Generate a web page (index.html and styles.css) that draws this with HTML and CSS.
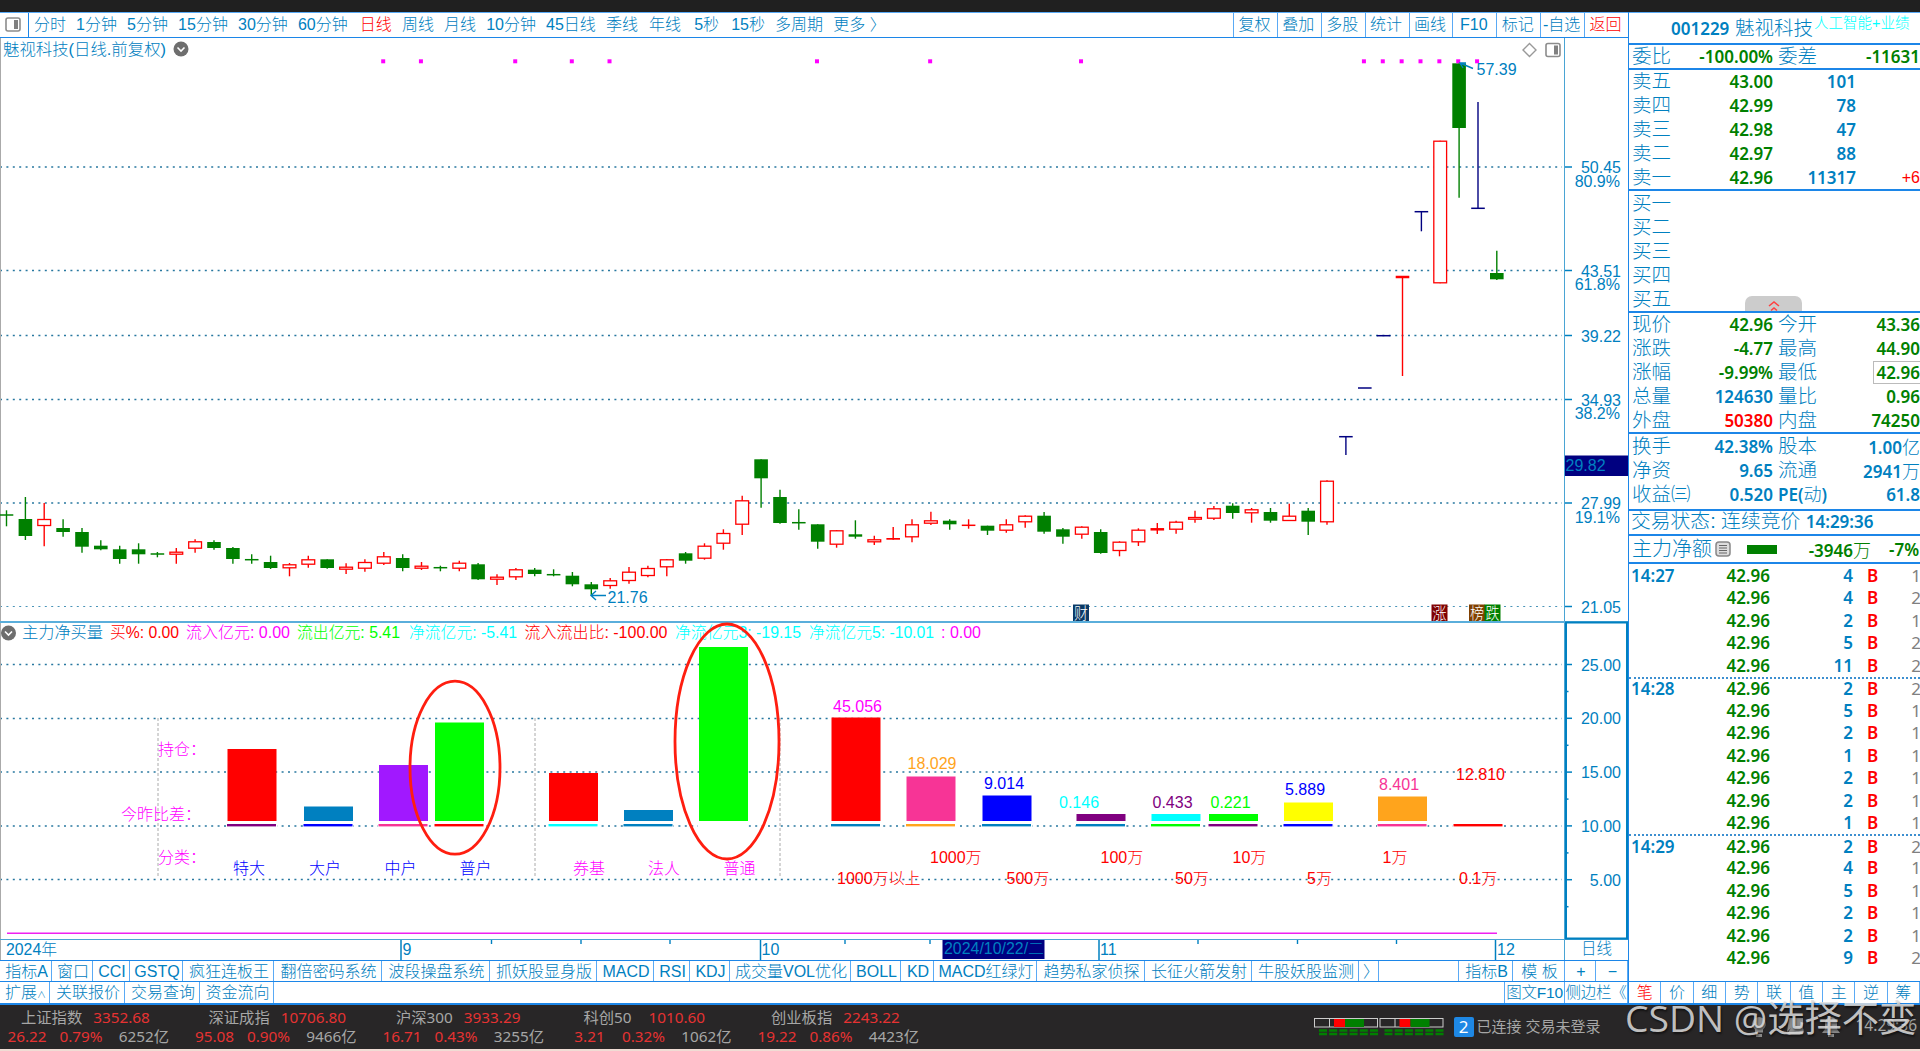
FILE: index.html
```html
<!DOCTYPE html>
<html lang="zh-CN">
<head>
    <meta charset="UTF-8">
    <title>魅视科技 001229</title>
    <link rel="stylesheet" href="styles.css">
</head>
<body>
    <div class="titlebar"></div>
    <div class="workspace">
        <div class="left">
            <div class="toolbar">
                <div class="toggle">
                    <svg width="16" height="15" viewBox="0 0 16 15"><rect x="1" y="1" width="14" height="13" rx="2" fill="none" stroke="#8c8c8c" stroke-width="1.6"/><rect x="9" y="3" width="4" height="9" fill="#808080"/></svg>
                </div>
                <div class="periods">
                    <span>分时</span><span>1分钟</span><span>5分钟</span><span>15分钟</span><span>30分钟</span><span>60分钟</span>
                    <span class="active">日线</span><span>周线</span><span>月线</span><span>10分钟</span><span>45日线</span><span>季线</span>
                    <span class="wide">年线</span><span class="wide">5秒</span><span>15秒</span><span>多周期</span><span>更多 〉</span>
                </div>
                <div class="tools">
                    <span>复权</span><span>叠加</span><span>多股</span><span>统计</span><span>画线</span><span class="latin">F10</span><span>标记</span><span>-自选</span><span class="red">返回</span>
                </div>
            </div>
            <svg id="chart" class="chart" width="1628" height="922" viewBox="0 38 1628 922"></svg>
            <div class="tabs indicators">
                <span>指标A</span><span>窗口</span><span>CCI</span><span>GSTQ</span><span>疯狂连板王</span><span>翻倍密码系统</span><span>波段操盘系统</span><span>抓妖股显身版</span><span>MACD</span><span>RSI</span><span>KDJ</span><span>成交量VOL优化</span><span>BOLL</span><span>KD</span><span>MACD红绿灯</span><span>趋势私家侦探</span><span>长征火箭发射</span><span>牛股妖股监测</span><span class="more">〉</span><span></span><span>指标B</span><span>模 板</span><span>+</span><span>−</span>
            </div>
            <div class="tabs extras">
                <span>扩展<small>∧</small></span><span>关联报价</span><span>交易查询</span><span>资金流向</span><span></span><span class="tight">图文F10</span><span class="tight">侧边栏《</span>
            </div>
        </div>

        <div class="side">
            <div class="stock"><b>001229</b><span class="name">魅视科技</span><span class="topic">人工智能+业绩</span></div>
            <div class="block ratio">
                <div class="row"><span>委比</span><b class="green">-100.00%</b><span>委差</span><b class="green">-11631</b></div>
            </div>
            <div class="block asks">
                <div class="quote"><span>卖五</span><b class="green">43.00</b><b>101</b><i></i></div>
                <div class="quote"><span>卖四</span><b class="green">42.99</b><b>78</b><i></i></div>
                <div class="quote"><span>卖三</span><b class="green">42.98</b><b>47</b><i></i></div>
                <div class="quote"><span>卖二</span><b class="green">42.97</b><b>88</b><i></i></div>
                <div class="quote"><span>卖一</span><b class="green">42.96</b><b>11317</b><i>+6</i></div>
            </div>
            <div class="block bids">
                <div class="quote"><span>买一</span></div>
                <div class="quote"><span>买二</span></div>
                <div class="quote"><span>买三</span></div>
                <div class="quote"><span>买四</span></div>
                <div class="quote"><span>买五</span></div>
                <div class="handle">
                    <svg width="14" height="12" viewBox="0 0 14 12" fill="none" stroke="#ff4040" stroke-width="1.6"><path d="M2 6 L7 2 L12 6 M4 10.5 L7 8 L10 10.5"/></svg>
                </div>
            </div>
            <div class="block info">
                <div class="row"><span>现价</span><b class="green">42.96</b><span>今开</span><b class="green">43.36</b></div>
                <div class="row"><span>涨跌</span><b class="green">-4.77</b><span>最高</span><b class="green">44.90</b></div>
                <div class="row"><span>涨幅</span><b class="green">-9.99%</b><span>最低</span><b class="green boxed">42.96</b></div>
                <div class="row"><span>总量</span><b>124630</b><span>量比</span><b class="green">0.96</b></div>
                <div class="row"><span>外盘</span><b class="red">50380</b><span>内盘</span><b class="green">74250</b></div>
            </div>
            <div class="block finance">
                <div class="row"><span>换手</span><b>42.38%</b><span>股本</span><b>1.00<em>亿</em></b></div>
                <div class="row"><span>净资</span><b>9.65</b><span>流通</span><b>2941<em>万</em></b></div>
                <div class="row"><span>收益㈢</span><b>0.520</b><span><b>PE(</b><em class="dong">动</em><b>)</b></span><b>61.8</b></div>
            </div>
            <div class="block state">交易状态: 连续竞价 <b>14:29:36</b></div>
            <div class="block flow">
                <span>主力净额</span>
                <svg width="16" height="16" viewBox="0 0 16 16"><rect x="1" y="1" width="14" height="14" rx="3" fill="#ddd" stroke="#888" stroke-width="1.5"/><path d="M4 4.5h8M4 7h8M4 9.5h8M4 12h8" stroke="#666" stroke-width="1.2"/></svg>
                <i class="bar"></i>
                <b class="green amount">-3946<em>万</em></b>
                <b class="green">-7%</b>
            </div>
            <div id="ticks" class="ticks"></div>
            <div class="sidetabs">
                <span class="red">笔</span><span>价</span><span>细</span><span>势</span><span>联</span><span>值</span><span>主</span><span>逆</span><span>筹</span>
            </div>
        </div>
    </div>

    <div class="statusbar">
        <div class="index"><p><span>上证指数</span><b>3352.68</b></p><div><b>26.22</b><b>0.79%</b><span>6252亿</span></div></div>
        <div class="index"><p><span>深证成指</span><b>10706.80</b></p><div><b>95.08</b><b>0.90%</b><span>9466亿</span></div></div>
        <div class="index"><p><span>沪深300</span><b>3933.29</b></p><div><b>16.71</b><b>0.43%</b><span>3255亿</span></div></div>
        <div class="index"><p><span>科创50</span><b>1010.60</b></p><div><b>3.21</b><b>0.32%</b><span>1062亿</span></div></div>
        <div class="index"><p><span>创业板指</span><b>2243.22</b></p><div><b>19.22</b><b>0.86%</b><span>4423亿</span></div></div>
        <svg class="meters" width="130" height="18" viewBox="0 0 130 18">
            <g id="meter">
                <rect x="0.5" y="0.5" width="63" height="8.5" fill="none" stroke="#ccc"/>
                <path d="M15.5 0v9" stroke="#ccc"/>
                <rect x="20" y="1" width="11" height="8" fill="#f00"/>
                <rect x="31" y="1" width="19" height="8" fill="#008000"/>
                <path d="M5 12.5h59M5 16h59" stroke="#008000" stroke-width="2.6" stroke-dasharray="8 2.2"/>
            </g>
            <use href="#meter" x="65.5"/>
        </svg>
        <span class="badge">2</span>
        <span class="conn">已连接 交易未登录</span>
        <svg class="tray" width="92" height="22" viewBox="0 0 92 22" fill="#8a8a8a">
            <path d="M10 1a7 7 0 0 1 4 12.500v3H6v-3A7 7 0 0 1 10 1zM7 18h6v3H7z"/>
            <path d="M40 2h14v10H42l-4 4zM42 12a6 6 0 0 1 12 6H38z"/>
            <path d="M82 1a6 6 0 0 1 6 6v6l3 4H73l3-4V7a6 6 0 0 1 6-6zM79 18h6v3h-6z"/>
        </svg>
        <span class="clock">14:29:36</span>
        <span class="mark">CSDN @选择不变</span>
    </div>
    <script src="chart.js"></script>
</body>
</html>
```
FILE: styles.css
```css
* {
    box-sizing: border-box;
}
body {
    margin: 0;
    width: 1920px;
    height: 1051px;
    overflow: hidden;
    background: #f0dcd4;
    color: #0080c0;
    font: 300 16px/1 "Liberation Sans", "Noto Sans CJK SC", sans-serif;
}
em, i {
    font-style: normal;
}
.titlebar {
    height: 12px;
    background: #202020;
}
.workspace {
    display: grid;
    grid-template-columns: 1628px 292px;
    height: 993px;
    background: #fff;
}
.red {
    color: #f00 !important;
}
.green {
    color: #008000 !important;
}

/* toolbar */
.toolbar {
    display: flex;
    height: 26px;
    border-top: 1px solid #5aaaf5;
    border-bottom: 1px solid #1c86e8;
    white-space: nowrap;
}
.toggle {
    width: 29px;
    padding: 4px 0 0 5px;
    border-right: 1px solid #1c86e8;
}
.periods {
    display: flex;
    gap: 10.1px;
    width: 1204px;
    padding: 4px 0 0 5px;
}
.periods .active {
    margin-left: 2px;
    color: #f00;
}
.periods .wide {
    margin-left: 1px;
    margin-right: 2px;
}
.tools {
    flex: 1;
    display: grid;
    grid-template-columns: repeat(9, 1fr);
}
.tools span {
    border-left: 1px solid #5aaaf5;
    text-align: center;
    padding: 4px 2px 0 0;
}

/* chart */
.chart {
    display: block;
}
.chart text {
    font-size: 16px;
}

/* bottom tabs */
.tabs {
    display: grid;
    border-top: 1px solid #1c86e8;
    white-space: nowrap;
}
.tabs span {
    border-right: 1px solid #5aaaf5;
    text-align: center;
    padding: 3px 0 0 2px;
    overflow: hidden;
}
.tabs small {
    font-size: 9px;
}
.tabs .more {
    padding-left: 4px;
    text-align: left;
}
.indicators {
    height: 21px;
    grid-template-columns: 52px 41px 37px 53px 91px 108px 108px 107px 57px 36px 40px 121px 50px 33px 103px 108px 107px 107px 20px 80px 54px 52px 31px 32px;
}
.extras {
    height: 24px;
    grid-template-columns: 50px 75px 75px 74px 1231px 60px 63px;
    border-bottom: 2px solid #1c86e8;
}
.extras .tight {
    padding-left: 0;
    font-size: 15.5px;
    letter-spacing: -0.2px;
}

/* quote panel */
.side {
    border-left: 1px solid #1c86e8;
    font-size: 19.5px;
    overflow: hidden;
    white-space: nowrap;
    display: flex;
    flex-direction: column;
}
.side b {
    font: 600 17px/1 "Noto Sans", sans-serif;
}
.side b em {
    font: 300 18px/1 "Noto Sans CJK SC", sans-serif;
}
.stock {
    display: flex;
    height: 31px;
    border-top: 1px solid #5aaaf5;
    padding: 6px 0 0 42px;
}
.stock b {
    width: 64px;
    padding-top: 1px;
}
.name {
    width: 79px;
}
.topic {
    color: #00ffff;
    font-size: 14.5px;
    margin-top: -3px;
}
.block {
    border-top: 2px solid #1c86e8;
    padding-left: 3px;
    flex: none;
}
.ratio {
    height: 25px;
}
.row {
    display: grid;
    grid-template-columns: 60px 81px 60px 87px;
    height: 23.9px;
    align-items: center;
}
.row > b {
    text-align: right;
}
.row > span:nth-child(3) {
    padding-left: 5px;
}
.boxed {
    justify-self: end;
    outline: 1px solid #bbb;
    padding: 2px 0 2px 2px;
}
.dong {
    font-size: 18px;
}
.quote {
    display: grid;
    grid-template-columns: 60px 81px 83px 64px;
    height: 23.9px;
    align-items: center;
}
.quote b {
    text-align: right;
}
.quote i {
    color: #f00;
    font-size: 16px;
    text-align: right;
}
.asks {
    height: 121px;
}
.bids {
    height: 122px;
    padding-top: 1px;
    position: relative;
}
.handle {
    position: absolute;
    left: 116px;
    bottom: 0;
    width: 57px;
    height: 15px;
    border-radius: 7px 7px 0 0;
    background: #ccc;
    text-align: center;
}
.info {
    height: 121px;
}
.finance {
    height: 77px;
    padding-top: 1px;
}
.state {
    height: 25px;
    padding: 1px 0 0 2px;
    font-size: 19.8px;
}
.flow {
    display: flex;
    align-items: center;
    height: 28px;
}
.flow > span {
    font-size: 20px;
}
.flow svg {
    margin-left: 3px;
}
.bar {
    width: 30px;
    height: 9px;
    margin-left: 16px;
    background: #008000;
}
.amount {
    width: 94px;
    text-align: right;
    margin-right: 18px;
}
.ticks {
    border-top: 2px solid #1c86e8;
    height: 419px;
}
.tick {
    display: grid;
    grid-template-columns: 70px 69px 83px 34px 34px;
    height: 22.5px;
    padding-left: 2px;
    align-items: center;
    text-align: right;
}
.tick b:first-child {
    text-align: left;
}
.tick b:nth-child(4) {
    color: #f00;
    text-align: center;
    padding-left: 5px;
}
.tick b:last-child {
    color: #808080;
    font-weight: 400;
}
.tick.minute {
    border-top: 2px dotted #3d8fd0;
}
.sidetabs {
    display: grid;
    grid-template-columns: repeat(9, 1fr);
    height: 24px;
    border-top: 1px solid #1c86e8;
    border-bottom: 2px solid #1c86e8;
    font-size: 16px;
    text-align: center;
}
.sidetabs span {
    border-right: 1px solid #5aaaf5;
    padding-top: 3px;
}

/* status bar */
.statusbar {
    display: flex;
    align-items: center;
    height: 44px;
    background: #282627;
    color: #a6a6a6;
    font: 400 15.3px/1 "Noto Sans", "Noto Sans CJK SC", sans-serif;
    position: relative;
    white-space: nowrap;
}
.index {
    width: 187.5px;
    flex: none;
}
.index b {
    color: #e63232;
    font-weight: 400;
}
.index p {
    display: flex;
    gap: 11px;
    margin: 0 0 3px;
    padding-left: 21px;
    height: 16px;
}
.index p span:first-child {
    min-width: 54px;
}
.index div {
    display: grid;
    grid-template-columns: 54px 54px 72px;
    text-align: center;
    height: 16px;
}
.meters {
    margin: 0 10px 0 376px;
    flex: none;
}
.badge {
    width: 20px;
    height: 20px;
    border-radius: 2px;
    background: #1e88e5;
    color: #fff;
    text-align: center;
    font-size: 17px;
    line-height: 20px;
    flex: none;
}
.conn {
    margin: -2px 0 0 3px;
    width: 272px;
    font-size: 15px;
    flex: none;
}
.tray {
    flex: none;
}
.clock {
    margin: -2px 0 0 15px;
    font-size: 15.5px;
}
.mark {
    position: absolute;
    left: 1625px;
    top: -6px;
    font: 400 37.3px/1 "Open Sans", "Noto Sans CJK SC", sans-serif;
    color: rgba(222, 222, 222, 0.85);
    text-shadow: 1px 2px 2px rgba(0, 0, 0, 0.5);
}
```
FILE: chart.js
```js
const svg = document.getElementById('chart');
const BLUE = '#0080c0';
let out = '';

function line(x1, y1, x2, y2, color, width = 1, extra = '') {
    out += `<line x1="${x1}" y1="${y1}" x2="${x2}" y2="${y2}" stroke="${color}" stroke-width="${width}" ${extra}/>`;
}
function rect(x, y, w, h, fill, extra = '') {
    out += `<rect x="${x}" y="${y}" width="${w}" height="${h}" fill="${fill}" ${extra}/>`;
}
function text(x, y, str, color = BLUE, len = 0, anchor = 'start') {
    const fit = len ? `textLength="${len}" lengthAdjust="spacingAndGlyphs"` : '';
    out += `<text x="${x}" y="${y}" fill="${color}" text-anchor="${anchor}" ${fit}>${str}</text>`;
}
function dropIcon(cx, cy) {
    out += `<circle cx="${cx}" cy="${cy}" r="7.5" fill="#6e6e6e"/>`;
    out += `<path d="M${cx - 3.5} ${cy - 1.5} l3.5 3.5 l3.5 -3.5" fill="none" stroke="#fff" stroke-width="1.6"/>`;
}

// grid
const dots = 'stroke-dasharray="2 4.4"';
[167, 270.5, 335.5, 399.5, 503, 664.5, 718.5, 772, 826, 879.5].forEach(y => line(0, y, 1562, y, '#2878a0', 1.6, dots));
line(0, 606.5, 1562, 606.5, '#4a94b8', 1, dots);
[158, 535, 780].forEach(x => line(x, 718, x, 878, '#aaa', 1, 'stroke-dasharray="3 2"'));

// frame and axis
line(0.5, 38, 0.5, 960, '#aaa');
line(1564.5, 38, 1564.5, 960, '#4aa4d4');
line(0, 622, 1628, 622, '#5aaedb', 2);
line(0, 939.5, 1628, 939.5, '#4aa4d4');
rect(1566, 622.5, 61, 316, 'none', 'stroke="#0080c0" stroke-width="2"');

const prices = [[167, '50.45', '80.9%'], [270.5, '43.51', '61.8%'], [335.5, '39.22'], [399.5, '34.93', '38.2%'], [503, '27.99', '19.1%'], [606.5, '21.05']];
prices.forEach(([y, price, pct]) => {
    line(1565, y, 1572, y, BLUE, 1.5);
    text(1621, y + 6, price, BLUE, 0, 'end');
    if (pct) text(1620, y + 19.7, pct, BLUE, 0, 'end');
});
[25, 20, 15, 10, 5].forEach((v, i) => {
    const y = 664.5 + i * 53.8;
    line(1565, y, 1572, y, BLUE, 1.5);
    line(1565, y + 27, 1568.5, y + 27, BLUE, 1.5);
    text(1621, y + 6, v.toFixed(2), BLUE, 0, 'end');
});
rect(1565, 455.5, 63, 20.5, '#000080');
text(1565.5, 470.5, '29.82');

// candles: color, high, body top, body bottom, low (thirds of a pixel below y=440)
const candles = [
    ['g',211,225,227,259],['g',171,237,288,300],['r',189,237,258,319],['g',238,264,276,290],['g',264,276,320,338],
    ['g',301,317,328,331],['g',317,328,357,371],['g',310,328,343,371],['g',336,342,344,352],['r',324,335,344,371],
    ['r',298,304,326,338],['g',301,306,324,329],['g',321,324,357,371],['g',343,359,361,371],['g',347,366,384,387],
    ['r',369,373,385,409],['r',347,358,374,383],['g',358,358,384,386],['r',370,380,389,402],['r',358,366,386,395],
    ['r',336,349,371,375],['g',343,354,384,394],['r',366,377,386,390],['g',377,383,385,394],['r',362,368,386,394],
    ['g',369,373,418,420],['r',403,410,419,435],['r',384,388,412,420],['g',384,389,402,409],['g',388,404,406,409],
    ['g',396,407,433,439],['g',426,433,448,466],['r',414,421,438,446],['r',381,395,423,431],['r',377,384,408,412],
    ['r',357,358,382,409],['g',336,340,362,371],['r',310,317,356,359],['r',268,279,311,329],['r',167,181,254,285],
    ['g',58,58,115,203],['g',149,171,249,251],['g',208,248,250,269],['g',253,253,305,326],['r',270,271,314,323],
    ['g',241,283,290,296],['r',287,298,307,315],['R',261,294,299,299],['r',238,253,292,307],['r',215,241,251,255],
    ['g',238,242,253,269],['r',238,256,258,266],['g',257,257,272,285],['r',238,253,272,278],['r',226,227,247,263],
    ['g',216,227,275,281],['g',264,268,290,311],['r',259,260,284,296],['g',268,276,339,341],['r',304,305,333,349],
    ['r',265,269,307,318],['R',249,268,272,282],['r',242,245,269,281],['r',212,231,239,248],['r',198,205,236,240],
    ['g',190,197,219,236],['r',204,208,220,248],['g',204,216,242,248],['r',191,227,243,243],['g',204,212,245,285],
    ['r',121,122,247,254],['b',-10,-10,-10,45],['b',-156,-156,-156,-156],['b',-313,-313,-313,-313],['R',-489,-489,-486,-192],
    ['b',-685,-685,-685,-626],['r',-898,-898,-470,-470],['g',-1130,-1130,-936,-727],['b',-1014,-695,-695,-695],['g',-568,-501,-482,-480]
];
const colors = { g: '#008000', r: '#f00', R: '#f00', b: '#000080' };
candles.forEach(([kind, ...v], i) => {
    const x = +(6.5 + i * 18.865).toFixed(1);
    const [high, top, bottom, low] = v.map(n => +(440 + n / 3).toFixed(1));
    const color = colors[kind];
    line(x, high, x, low, color, 1.4);
    if (kind === 'r' && bottom - top > 2) {
        rect(x - 6.4, top + 0.5, 12.8, Math.max(bottom - top - 1, 1.5), '#fff', 'stroke="#f00" stroke-width="1.3"');
    } else if (bottom - top < 1.6) {
        line(x - 6.8, top, x + 6.8, top, color, kind === 'R' ? 2.5 : 1.5);
    } else {
        rect(x - 6.8, top, 13.6, bottom - top, color);
    }
});
[20, 22, 27, 30, 32, 43, 49, 57, 72, 73, 74, 75, 76, 77, 78].forEach(i => rect(4 + i * 18.86, 59.3, 4, 4, '#f0f'));

out += `<path d="M1473 68.5 L1460 63 m6 0 l-6 0 l3 5" fill="none" stroke="${BLUE}" stroke-width="1.4"/>`;
text(1476.5, 75.3, '57.39');
out += `<path d="M606 595.5 H591 m5 -4.5 l-5 4.5 l5 4.5" fill="none" stroke="${BLUE}" stroke-width="1.4"/>`;
text(607.5, 602.5, '21.76');

// event marks
[[1073, '财', '#0b3a66'], [1431.5, '涨', '#800000'], [1469, '榜', '#804000'], [1484.5, '跌', '#008000']].forEach(([x, s, c]) => {
    rect(x, 604.5, 16, 16.5, c);
    text(x + 1, 618.5, s, '#fff', 14);
});

// headings
text(3, 54.5, '魅视科技(日线.前复权)', BLUE, 163);
dropIcon(181, 49);
out += '<path d="M1529.5 43.5 l6.5 6.5 l-6.5 6.5 l-6.5 -6.5 z" fill="none" stroke="#999" stroke-width="1.4"/>';
rect(1546, 43.5, 14, 13, 'none', 'rx="2" stroke="#8c8c8c" stroke-width="1.6"');
rect(1554, 45.5, 4, 9, '#808080');
dropIcon(8.5, 633);
[
    [22, '主力净买量', BLUE, 81], [110, '买%: 0.00', '#f00', 69], [186, '流入亿元: 0.00', '#f0f', 104],
    [297, '流出亿元: 5.41', '#0f0', 103], [409, '净流亿元: -5.41', '#0ff', 108], [524.5, '流入流出比: -100.00', '#f00', 143],
    [675, '净流亿元3: -19.15', '#0ff', 126], [809, '净流亿元5: -10.01', '#0ff', 125], [941, ': 0.00', '#f0f', 40]
].forEach(([x, s, c, len]) => text(x, 638, s, c, len));

// bars: x, top, fill, underline
[
    [227.5, 749, '#f00', '#800080'], [304, 806.5, BLUE, '#00f'], [379, 765, '#a118ff', '#f73496'], [435, 722.5, '#0f0', '#f00'],
    [549, 773, '#f00', '#0ff'], [624, 810, BLUE, BLUE], [699, 647, '#0f0', '#fff'], [831.5, 717.5, '#f00', BLUE],
    [906.5, 776.5, '#f73496', '#ffa41c'], [982.5, 795.5, '#00f', BLUE], [1076.5, 814, '#800080', BLUE], [1151.5, 814, '#0ff', '#0f0'],
    [1209, 814, '#0f0', '#800080'], [1284, 802.5, '#ff0', '#00f'], [1378, 796.5, '#ffa41c', '#f73496'], [1454, 821, 'none', '#f00']
].forEach(([x, top, fill, under]) => {
    rect(x - 1, 821, 50.5, 6, '#fff');
    rect(x, top, 49, 821 - top, fill);
    rect(x - 0.5, 824, 49, 2.4, under);
});

[
    [833, 711.5, '45.056', '#f0f'], [907.5, 769, '18.029', '#ffa41c'], [984, 789, '9.014', '#00f'], [1059, 808, '0.146', '#0ff'],
    [1152.5, 808, '0.433', '#800080'], [1210.5, 808, '0.221', '#0f0'], [1285, 795, '5.889', '#00f'], [1379, 790, '8.401', '#f73496'],
    [1456, 780, '12.810', '#f00'],
    [158, 755, '持仓：', '#f0f'], [121, 820, '今昨比差：', '#f0f'], [158, 862.5, '分类：', '#f0f'],
    [233, 873.5, '特大', '#00f'], [309, 873.5, '大户', '#00f'], [384.5, 873.5, '中户', '#00f'], [459.5, 873.5, '普户', '#00f'],
    [573, 873.5, '券基', '#f0f'], [648, 873.5, '法人', '#f0f'], [723.5, 873.5, '普通', '#f0f'],
    [837, 884, '1000万以上', '#f00'], [930, 862.5, '1000万', '#f00'], [1006.5, 884, '500万', '#f00'], [1100.5, 862.5, '100万', '#f00'],
    [1175, 884, '50万', '#f00'], [1232.5, 862.5, '10万', '#f00'], [1307, 884, '5万', '#f00'], [1382.5, 862.5, '1万', '#f00'], [1459, 884, '0.1万', '#f00']
].forEach(([x, y, s, c]) => text(x, y, s, c));

out += '<ellipse cx="455" cy="767.7" rx="45" ry="86.5" fill="none" stroke="#ff1e10" stroke-width="2.8"/>';
out += '<ellipse cx="727" cy="741.5" rx="52" ry="117.5" fill="none" stroke="#ff1e10" stroke-width="2.8"/>';
line(7, 933.3, 1497, 933.3, '#f020f0', 1.6);

// dates
[401, 760.5, 1099, 1495.5].forEach(x => line(x, 940, x, 960, BLUE, 1.5));
[491.5, 581, 670, 845, 930, 1198, 1297.5, 1396.5].forEach(x => line(x, 940, x, 944, BLUE, 1.4));
text(6, 955, '2024年', BLUE, 51);
text(402.5, 955.3, '9');
text(761.5, 955.3, '10');
text(1100, 955.3, '11');
text(1497, 955.3, '12');
rect(942.5, 940, 102, 19, '#000080');
text(944, 954, '2024/10/22/二', BLUE, 100);
text(1581, 954, '日线', BLUE, 31);

svg.innerHTML = out;

// trades
const trades = [
    ['14:27', 4, 1], ['', 4, 2], ['', 2, 1], ['', 5, 2], ['', 11, 2],
    ['14:28', 2, 2], ['', 5, 1], ['', 2, 1], ['', 1, 1], ['', 2, 1], ['', 2, 1], ['', 1, 1],
    ['14:29', 2, 2], ['', 4, 1], ['', 5, 1], ['', 2, 1], ['', 2, 1], ['', 9, 2]
];
document.getElementById('ticks').innerHTML = trades.map(([time, vol, n], i) =>
    `<div class="tick${time && i ? ' minute' : ''}"><b>${time}</b><b class="green">42.96</b><b>${vol}</b><b>B</b><b>${n}</b></div>`
).join('');
```
